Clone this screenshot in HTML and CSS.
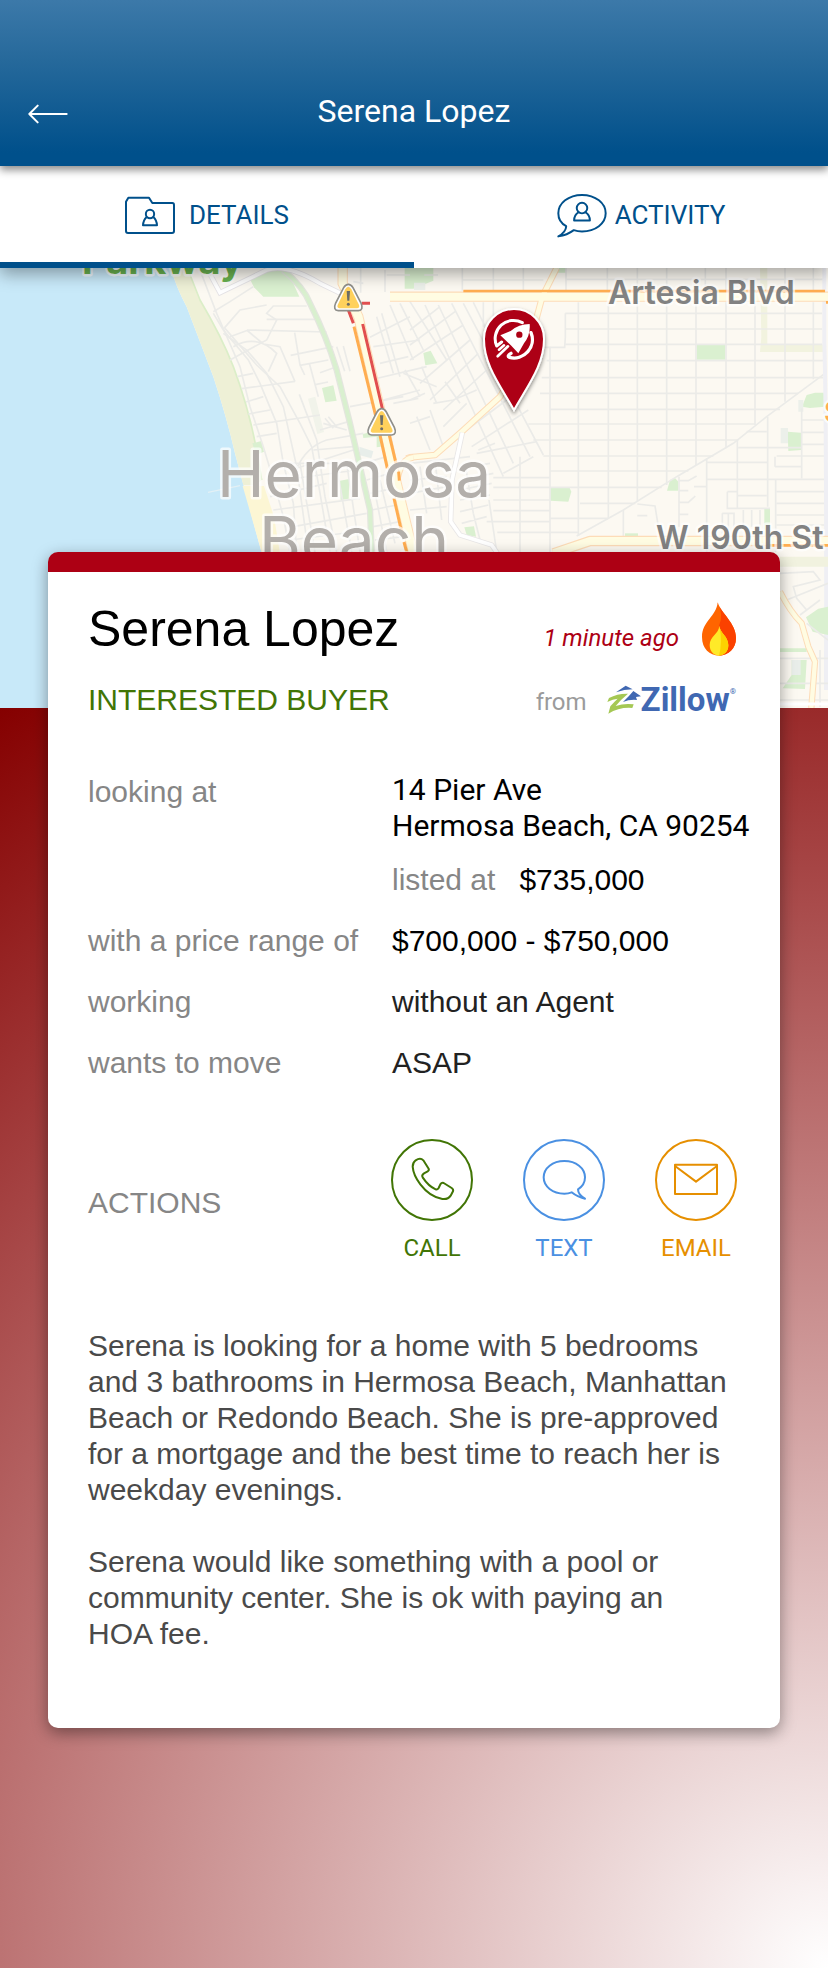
FILE: index.html
```html
<!DOCTYPE html>
<html lang="en">
<head>
<meta charset="utf-8">
<meta name="viewport" content="width=device-width, initial-scale=1">
<title>Serena Lopez</title>
<link rel="stylesheet" href="styles.css">
</head>
<body>
<header class="topbar">
  <button class="back" type="button" aria-label="Back">
    <svg class="back-icon" viewBox="86 133 120 58" fill="none" stroke="#fff" stroke-width="6" stroke-linecap="round" stroke-linejoin="round"><path d="M202 162H91M115 137L90 162L115 187"/></svg>
  </button>
  <h1 class="topbar-title">Serena Lopez</h1>
</header>

<nav class="tabs" role="tablist">
  <button class="tab tab-active" type="button" role="tab" aria-selected="true">
    <svg class="folder-icon" viewBox="378 408 150 114" fill="none" stroke="#00508b" stroke-width="6" stroke-linejoin="round"><path d="M381 425L388 413H450L460 429H520Q525 429 525 435V513Q525 519 519 519H387Q381 519 381 513Z"/><circle cx="453" cy="462" r="12.500"/><path d="M443 471Q433 480 432 496H474Q473 480 463 471"/></svg>
    <span>DETAILS</span>
  </button>
  <button class="tab tab-second" type="button" role="tab" aria-selected="false">
    <svg class="bubble-icon" viewBox="443 400 152 135" fill="none" stroke="#00508b" stroke-width="6" stroke-linejoin="round"><path d="M447 531Q470 518 471 500C455 492 447 478 447 461C447 430 478 405 519 405S591 430 591 461S560 516 519 516Q506 516 494 512Q474 527 447 531Z"/><circle cx="519" cy="445" r="16"/><path d="M508 458Q495 466 495 483H543Q543 466 530 458"/></svg>
    <span>ACTIVITY</span>
  </button>
</nav>

<main class="page">
<svg class="map" viewBox="0 0 828 440" preserveAspectRatio="xMidYMin slice" role="img" aria-label="Map of Hermosa Beach">
  <defs>
    <filter id="pin-shadow" x="-30%" y="-20%" width="160%" height="150%"><feDropShadow dx="0" dy="7" stdDeviation="6" flood-color="#000" flood-opacity=".5"/></filter>
    <g id="warning">
      <path d="M0-40Q8-40 14-30L38 16Q47 37 30 39H-30Q-47 37-38 16L-14-30Q-8-40 0-40Z" fill="#fff" stroke="#8f8f8a" stroke-width="5"/>
      <path d="M0-33Q5-33 9-25L31 20Q36 31 27 32H-27Q-36 31-31 20L-9-25Q-5-33 0-33Z" fill="#ffd15c"/>
      <path d="M-5-20H5L3 9H-3Z" fill="#6d6d66"/><circle cy="20" r="4.500" fill="#6d6d66"/>
    </g>
  </defs>
  <rect width="828" height="440" fill="#fcf9f2"/>

  <!-- coast and west side -->
  <g transform="translate(0 -18) scale(.33333)">
    <path d="M0 54H512Q530 115 560 170L640 380Q680 500 705 610L785 910V1400H0Z" fill="#c8e9f9"/>
    <path d="M512 54H562L600 150Q665 260 700 350Q760 510 785 690L768 706H730L705 610Q680 500 640 380L560 170Q530 115 512 54Z" fill="#eef0d6"/>
    <path d="M562 54L600 150Q665 260 700 350Q760 510 785 690" fill="none" stroke="#dbeec8" stroke-width="5"/>
    <path d="M728 708H792L822 800L840 910H786Z" fill="#fcf6d4"/>
    <path d="M624 727L720 707" stroke="#e3f0f5" stroke-width="4"/>
    <g fill="#daf0d0">
      <path d="M750 88L800 60H862L898 140H790L762 112Z"/><path d="M1214 54H1300V92L1240 116H1214Z"/>
      <path d="M966 414L1000 406L1010 452L976 457Z"/><path d="M757 580L784 573L792 605L768 615Z"/>
      <path d="M1020 692L1048 687L1046 746L1022 750Z"/><path d="M1088 552L1142 540V590L1130 592V560L1090 564Z"/>
    </g>
    <path d="M924 446L946 440L972 546L952 552Z" fill="#f1f3ea"/><path d="M1078 590L1120 604L1114 625L1080 616Z" fill="#e8eeea"/>
    <g fill="none" stroke="#ebebe8" stroke-width="5">
      <path d="M600 60L650 190L720 350L750 470L790 590L820 690L850 800L870 906"/>
      <path d="M640 190L670 240L745 330L780 400L830 520L850 640L880 760L890 906"/>
      <path d="M670 250L740 300L800 370L850 470L870 560L890 650L925 906"/>
      <path d="M675 235L770 345L840 410L900 520L935 590L955 700L990 906"/>
      <path d="M898 433L950 570L975 740L1010 906"/>
      <path d="M640 185L690 155L760 110M672 235L720 180L800 165M690 330L800 270L830 210L800 190L820 168H920"/>
      <path d="M690 260L745 240L980 246M800 208H945M740 240L790 282L840 290L885 395M700 290Q770 250 830 310L805 365"/>
      <path d="M884 248L900 345L914 375M872 316L1000 290M900 346L985 330M960 368L1010 350M928 340L955 440M946 404L984 396"/>
      <path d="M1010 290L1034 364M1030 288L1050 364"/>
      <path d="M712 380L760 370M725 416L885 394M738 456L790 440M745 492L810 480M760 525L960 495M770 560L830 550M970 520L1040 540M975 505L1000 535M985 500L1010 530M960 540L1045 515"/>
      <path d="M1160 75H1314M1155 60V126M1082 54V128M1060 95L1090 100M1050 470L1210 440M1110 262L1230 200M1130 200L1180 370M1145 190L1200 380M1170 165L1240 330M1200 160L1270 300M1120 290L1260 270M1140 340L1225 320M1210 370L1310 410M1150 450L1260 420M1180 460L1255 445M1215 360L1260 440M1110 390L1280 350"/>
      <path d="M800 700L890 690M810 740L980 700M820 780L1080 745M880 830L1100 790M870 870L1110 840M890 655L1060 600M890 655Q920 590 980 570L1090 550M900 640L945 906M940 600L1060 590M1010 650L1055 906M1040 640L1080 906M860 640H1060M850 690L1070 660"/>
      <path d="M1120 700L1160 906M1140 690L1185 880M1090 640L1160 620M1100 690L1170 670M1110 730L1180 715M1115 780L1190 765M1120 830L1200 815M1125 870L1210 860"/>
    </g>
    <path d="M850 60Q910 110 930 160Q980 260 1010 360L1050 520L1080 650L1110 780L1115 906" fill="none" stroke="#e4e6df" stroke-width="19"/>
    <path d="M850 60Q910 110 930 160Q980 260 1010 360L1050 520L1080 650L1110 780L1115 906" fill="none" stroke="#d9f0cf" stroke-width="12"/>
    <path d="M632 76L660 128L800 60Q860 40 960 100L1030 134" fill="none" stroke="#e5e3e6" stroke-width="16"/>
    <path d="M632 76L660 128L800 60Q860 40 960 100L1030 134" fill="none" stroke="#fff" stroke-width="11"/>
  </g>

  <!-- street grid on the east side -->
  <g transform="translate(410 -18) scale(.33333)">
    <g fill="#daf0d0">
      <path d="M0 54H45L40 100L0 115Z"/><path d="M447 54H468V68H443Z"/><path d="M40 309L62 302L82 340L46 346Z"/>
      <path d="M860 284H946V329H860Z"/><path d="M1176 470L1190 435L1215 428H1245V470L1200 474Z"/><path d="M1133 545L1173 548V600L1135 603Z"/>
      <path d="M771 722L780 690L795 684L805 695V722Z"/><path d="M421 712H478L484 725L475 755L421 752Z"/><path d="M163 832L192 829L198 860L170 855Z"/><path d="M1063 777H1080V858H1063Z"/><path d="M645 850H684V862H645Z"/>
    </g>
    <path d="M1050 54H1072V283H1240V306H1050L1054 262Z" fill="#f2f3df"/><path d="M1112 534H1134V580H1112ZM1165 450H1180V485H1165ZM12 98H46V120H12Z" fill="#ecf0ea"/>
    <g fill="none" stroke="#ebebe8" stroke-width="5">
      <path d="M157 54V122M250 54V122M340 54V122M468 54V122M592 54V122M682 54V122M770 54V122M886 54V122M948 54V122M1125 54V122M1210 54V122M157 90H400M468 88H1240"/>
      <path d="M420 290V906M505 157V858M595 157V805M682 157V755M770 157V705M858 157V645M948 157V595M1035 157V525M1125 157V455M1210 157V388"/>
      <path d="M466 190H1236M466 237H1236M466 283H1236M410 332H1240M395 383H1240M390 430H1165M420 478H1110M355 522H1035M370 570H985M400 618H910M420 663H835M250 712H755M250 750H420M510 760H676M420 805H595M250 683H420M250 782H420M230 815H420M262 847H505"/>
      <path d="M466 190V262L464 292H400M1245 370L1070 500L970 580L800 680L640 780L500 858"/>
      <path d="M890 625V906M982 570V775M1073 500V770M1175 475V685M1097 690V906M1010 545H1070M985 593H1175M890 637H1072M890 688H1245M1175 510H1245M1175 547H1245M1175 583H1245M1100 618H1245M1095 650V620M1095 650H1175M1100 725H1245M1100 760H1245M1100 795H1245M1100 825H1245M952 725V775H1080M952 725H982M982 737H1070M937 790V850M937 790H972V850M955 790V850M1000 780V830M1025 780V830M1050 780V830"/>
      <path d="M807 680V830M807 692H835L860 678M807 722H835M852 710H888M807 757H835L856 738M807 793H835M640 780V860M682 762L735 768L745 830M682 797H712"/>
      <path d="M160 160L400 615M125 160L360 620M85 165L310 640M45 165L280 680M0 155L110 330M190 157L255 290M220 157V230M250 157V220M330 620V906M237 750L260 906M205 600L255 580M185 590L355 480M200 610L380 575M280 670L370 620M0 240L90 170M0 285L135 185M0 330L160 225M30 400L180 270M60 450L205 310M100 480L230 360M35 350L80 460M105 395L150 460M70 460L130 450L200 420M60 480L100 590M20 500L60 600M0 450L45 430M100 530L170 460M0 520L60 500M170 540L290 450"/>
      <path d="M0 640L180 620M150 655L240 640M155 690L250 670M150 720L245 700M150 750L240 735M150 785L235 765M155 820L230 800M190 790L210 870M165 640L190 790M0 690L110 680M0 730L110 710M0 780L110 770M30 650L50 790M75 630L95 810"/>
    </g>
    <path d="M1243 54V280Q1250 500 1248 1320" fill="none" stroke="#efeff4" stroke-width="12"/>
    <g fill="none" stroke-linejoin="round">
      <path d="M440 54L397 140L378 210L340 330L270 440L155 545L75 615L0 622L-10 626" stroke="#fddcb8" stroke-width="20"/>
      <path d="M-60 140H1254M1254 873H540L430 910" stroke="#fddcb8" stroke-width="31"/><path d="M-60 140H1254M1254 873H540L430 910" stroke="#fffce2" stroke-width="24"/>
      <path d="M440 54L397 140L378 210L340 330L270 440L155 545L75 615L0 622L-10 626" stroke="#fffce2" stroke-width="14"/>
      <path d="M157 548L126 690L122 815L150 855L245 885L262 910" stroke="#e8e6e6" stroke-width="16"/><path d="M157 548L126 690L122 815L150 855L245 885L262 910" stroke="#fff" stroke-width="11"/>
      <path d="M160 123H1245M1075 886H1254M1248 157H1254" stroke="#ffad50" stroke-width="8"/>
    </g>
  </g>

  <!-- coast highway with traffic -->
  <g transform="translate(0 -18) scale(.33333)" fill="none">
    <path d="M1190 700Q1200 626 1240 622" stroke="#fddcb8" stroke-width="20"/><path d="M1190 700Q1200 626 1240 622" stroke="#fffce2" stroke-width="14"/>
    <path d="M1028 54V100L1075 200L1150 520L1190 700L1240 910" stroke="#fddcb8" stroke-width="31"/><path d="M1028 54V100L1075 200L1150 520L1190 700L1240 910" stroke="#fffce2" stroke-width="25"/>
    <path d="M1062 230L1130 510M1140 556L1162 655M1182 745L1206 850M1212 876L1220 906M1168 556L1188 640M1196 665L1198 692" stroke="#ffad50" stroke-width="9"/>
    <path d="M1085 160H1110M1045 180L1060 220M1088 222L1148 480" stroke="#e14f4f" stroke-width="9"/>
    <use href="#warning" x="1045" y="143"/><use href="#warning" x="1145" y="516"/>
  </g>

  <!-- south-east corner -->
  <g transform="translate(420 272) scale(.33333)" fill="none">
    <path d="M1080 50H1224V80H1080Z" fill="#f1f2df"/><path d="M1158 232L1195 206L1224 200V285L1178 275ZM1080 325H1160V336H1080ZM1115 360H1160L1155 447L1088 445L1115 405Z" fill="#daf0d0"/><path d="M1115 360H1142V405H1115Z" fill="#e9eeea"/>
    <path d="M1080 100L1180 95L1200 120L1120 140L1130 175L1160 210M1100 180L1224 130M1140 225L1200 180M1160 250L1224 300M1080 355H1224M1080 430H1224M1200 330V500M1080 480H1224" stroke="#ebebe8" stroke-width="5"/>
    <path d="M1080 155Q1110 215 1145 250L1165 320L1185 365L1174 504" stroke="#fddcb8" stroke-width="19"/><path d="M1080 155Q1110 215 1145 250L1165 320L1185 365L1174 504" stroke="#fffce2" stroke-width="13"/>
    <path d="M1080 492H1224" stroke="#fff" stroke-width="9"/>
  </g>

  <g class="map-labels">
    <text class="label-park" x="82" y="6">Parkway</text>
    <text class="label-street" x="608" y="36">Artesia Blvd</text>
    <text class="label-street" x="656" y="281">W 190th St</text>
    <text class="label-route" x="824" y="154">S</text>
    <text class="label-city" x="354" y="229">Hermosa</text>
    <text class="label-city" x="354" y="295">Beach</text>
  </g>

  <g transform="translate(410 -18) scale(.33333)">
    <path d="M312 480C270 405 222 345 222 267A90 90 0 0 1 402 267C402 345 354 405 312 480Z" fill="#ad0014" stroke="#fff" stroke-width="6" filter="url(#pin-shadow)"/>
    <g fill="none" stroke="#fff" stroke-linecap="round" stroke-linejoin="round">
      <path d="M337 218A55 55 0 0 0 260 288L275 276" stroke-width="9"/>
      <path d="M363 248A55 55 0 0 1 298 322Q290 318 303 310" stroke-width="10"/>
      <path d="M263 319L294 289M267 299L282 286" stroke-width="8"/>
    </g>
    <path d="M359 222Q362 255 342 280L325 310L304 287L271 256L302 243Q326 222 359 222Z" fill="#fff"/>
    <circle cx="328" cy="254" r="9.500" fill="#ad0014"/>
  </g>
</svg>

<div class="backdrop">
<article class="card">
  <div class="card-head">
    <h2 class="name">Serena Lopez</h2>
    <div class="received">
      <span class="time">1 minute ago</span>
      <svg class="flame" viewBox="846 188 102 160" aria-hidden="true"><path d="M893 188C902 220 948 250 948 295C948 328 925 347 897 348C869 347 846 328 846 292C846 245 890 230 893 188Z" fill="#ff6500"/><path d="M893 188C902 220 948 250 948 295C948 328 925 347 897 348V258Q912 226 893 188Z" fill="#fb4100"/><path d="M898 258C900 282 925 288 925 317C925 336 912 347 897 348C882 347 869 336 869 316C869 288 896 285 898 258Z" fill="#ffea28"/><path d="M898 258C900 282 925 288 925 317C925 336 912 347 897 348Q908 305 898 258Z" fill="#fdd100"/></svg>
    </div>
    <p class="role">INTERESTED BUYER</p>
    <div class="source">
      <span class="from">from</span>
      <span class="zillow">
        <svg class="zillow-mark" viewBox="558 430 102 90" aria-hidden="true"><path d="M585 452L614 432L635 443Q610 443 585 452ZM606 481Q624 464 637 448L660 464L645 466L648 475Q625 473 606 481Z" fill="#4068b2"/><path d="M564 469Q590 455 621 456Q599 474 584 493Q610 484 638 488L634 499Q595 496 562 516L568 494Q580 480 590 471Q576 472 559 481Z" fill="#a5c854"/></svg>
        <span class="zillow-text">Zillow</span><span class="zillow-reg">®</span>
      </span>
    </div>
  </div>

  <dl class="facts">
    <dt>looking at</dt>
    <dd class="listing">
      <address class="address">14 Pier Ave<br>Hermosa Beach, CA 90254</address>
      <div class="listed"><span class="muted">listed at</span><span>$735,000</span></div>
    </dd>
    <dt>with a price range of</dt><dd>$700,000 - $750,000</dd>
    <dt>working</dt><dd class="soft">without an Agent</dd>
    <dt>wants to move</dt><dd class="soft">ASAP</dd>
  </dl>

  <div class="actions">
    <h3 class="actions-title">ACTIONS</h3>
    <div class="action-list">
      <button class="action call" type="button">
        <svg class="action-icon" viewBox="63 57 246 246" fill="none" stroke="currentColor" stroke-width="6" stroke-linejoin="round"><circle cx="186" cy="180" r="120"/><path d="M137 121Q151 111 160 121L176 146Q178 151 173 154L162 160Q154 165 158 172Q175 198 197 208Q202 210 206 204L211 193Q215 187 221 189L245 204Q251 208 249 214L242 227Q234 239 217 237Q179 230 151 193Q130 166 128 140Q128 128 137 121Z"/></svg>
        <span>CALL</span>
      </button>
      <button class="action text" type="button">
        <svg class="action-icon" viewBox="459 57 246 246" fill="none" stroke="currentColor" stroke-width="6" stroke-linejoin="round"><circle cx="582" cy="180" r="120"/><path d="M645 236Q624 224 624 208Q645 195 645 172C645 144 618 123 583 123S521 144 521 172S548 221 583 221Q595 221 605 217Q622 231 645 236Z"/></svg>
        <span>TEXT</span>
      </button>
      <button class="action email" type="button">
        <svg class="action-icon" viewBox="855 57 246 246" fill="none" stroke="currentColor" stroke-width="6" stroke-linejoin="round"><circle cx="978" cy="180" r="120"/><path d="M915 134H1041V222H915ZM915 138L978 185L1041 138"/></svg>
        <span>EMAIL</span>
      </button>
    </div>
  </div>

  <div class="notes">
    <p>Serena is looking for a home with 5 bedrooms and 3 bathrooms in Hermosa Beach, Manhattan Beach or Redondo Beach. She is pre-approved for a mortgage and the best time to reach her is weekday evenings.</p>
    <p>Serena would like something with a pool or community center. She is ok with paying an HOA fee.</p>
  </div>
</article>
</div>
</main>
</body>
</html>
```

FILE: styles.css
```css
* { box-sizing: border-box; margin: 0; padding: 0; }

body {
  min-height: 100vh;
  display: flex;
  flex-direction: column;
  font-family: "Liberation Sans", Arial, sans-serif;
  font-size: 30px;
  line-height: 40px;
  color: #000;
}

button {
  border: 0;
  background: none;
  color: inherit;
  font: inherit;
  cursor: pointer;
}

svg { display: block; flex: none; }

h1, h2, h3 { font-weight: 400; }

/* Top bar */
.topbar {
  position: relative;
  z-index: 3;
  display: grid;
  grid-template-columns: 1fr auto 1fr;
  align-items: end;
  padding: 91px 28px 35px;
  background: linear-gradient(#3c79a9, #26699b 36%, #00508b 92%, #00508b);
  box-shadow: 0 4px 8px rgba(0, 0, 0, .45);
  color: #fff;
  font-family: Roboto, sans-serif;
}

.back { justify-self: start; height: 34px; }
.back-icon { width: 40px; height: 20px; }
.topbar-title { font-size: 32px; }

/* Tabs */
.tabs {
  position: relative;
  z-index: 2;
  display: flex;
  background: #fff;
  box-shadow: 0 6px 16px rgba(0, 0, 0, .35);
  color: #00508b;
  font-family: Roboto, sans-serif;
  font-size: 26px;
}

.tab {
  width: 50%;
  display: flex;
  align-items: center;
  justify-content: center;
  gap: 14px;
  height: 102px;
  padding-top: 2px;
  border-bottom: 6px solid transparent;
}

.tab-active { border-bottom-color: #00508b; }
.tab-second { gap: 8px; padding-left: 40px; }
.folder-icon { width: 50px; height: 38px; }
.bubble-icon { width: 50px; height: 45px; }

/* Map */
.page { flex: 1; display: flex; flex-direction: column; }
.map { width: 100%; height: 440px; }
.map-labels { font-family: Inter, sans-serif; paint-order: stroke; stroke: rgba(255, 255, 255, .7); stroke-width: 5px; stroke-linejoin: round; }
.label-park { font-size: 38px; font-weight: 700; fill: #69b24f; }
.label-street { font-size: 32px; font-weight: 600; fill: #828282; }
.label-route { font-size: 28px; font-weight: 600; fill: #ffad50; }
.label-city { font-size: 64px; font-weight: 400; fill: #b3afab; text-anchor: middle; }

/* Lead card */
.backdrop {
  flex: 1;
  display: flex;
  flex-direction: column;
  padding: 0 48px 48px;
  background: radial-gradient(circle farthest-corner at 100% 100%, #fff, #850000);
}

.card {
  position: relative;
  margin-top: -156px;
  padding: 27px 0 76px 40px;
  border-top: 20px solid #ad0014;
  border-radius: 10px;
  background: #fff;
  box-shadow: 0 5px 16px rgba(0, 0, 0, .4);
}

.card-head {
  display: grid;
  grid-template-columns: 1fr auto;
  row-gap: 21px;
  padding-right: 44px;
}

.name { font-size: 50px; line-height: 60px; }
.role { color: #417505; }

.received {
  display: flex;
  align-items: center;
  justify-content: flex-end;
  gap: 23px;
  font-family: Roboto, sans-serif;
}

.time { padding-top: 17px; color: #ad0014; font-size: 24px; font-style: italic; }
.flame { width: 34px; height: 54px; }

.source {
  display: flex;
  align-items: center;
  justify-content: flex-end;
  gap: 20px;
  font-family: Roboto, sans-serif;
}

.from { padding-top: 4px; color: #9b9b9b; font-size: 24px; line-height: 36px; }
.zillow { display: flex; align-items: center; color: #4068b2; }
.zillow-mark { width: 34px; height: 30px; }
.zillow-text { font-size: 33px; font-weight: 700; }
.zillow-reg { align-self: flex-start; font-size: 8px; line-height: 24px; }

.facts {
  display: grid;
  grid-template-columns: 304px 1fr;
  row-gap: 21px;
  margin-top: 52px;
  padding-right: 24px;
}

.facts dt, .muted { color: #868686; }
.listing { display: grid; gap: 16px; }
.address { font-family: Roboto, sans-serif; font-style: normal; line-height: 36px; }
.listed { display: flex; gap: 24px; }
.soft { color: #222; }

.actions {
  display: grid;
  grid-template-columns: 303px 1fr;
  align-items: center;
  margin-top: 56px;
  padding-right: 43px;
}

.actions-title { color: #868686; font-size: 30px; }
.action-list { display: flex; justify-content: space-between; }

.action {
  display: flex;
  flex-direction: column;
  align-items: center;
  gap: 9px;
  width: 82px;
  font-family: Roboto, sans-serif;
  font-size: 24px;
  line-height: 36px;
}

.action-icon { width: 82px; height: 82px; }
.call { color: #417505; }
.text { color: #4a90e2; }
.email { color: #e68f00; }

.notes {
  display: grid;
  gap: 36px;
  margin-top: 62px;
  padding-right: 50px;
  color: #4a4a4a;
  line-height: 36px;
}
```
